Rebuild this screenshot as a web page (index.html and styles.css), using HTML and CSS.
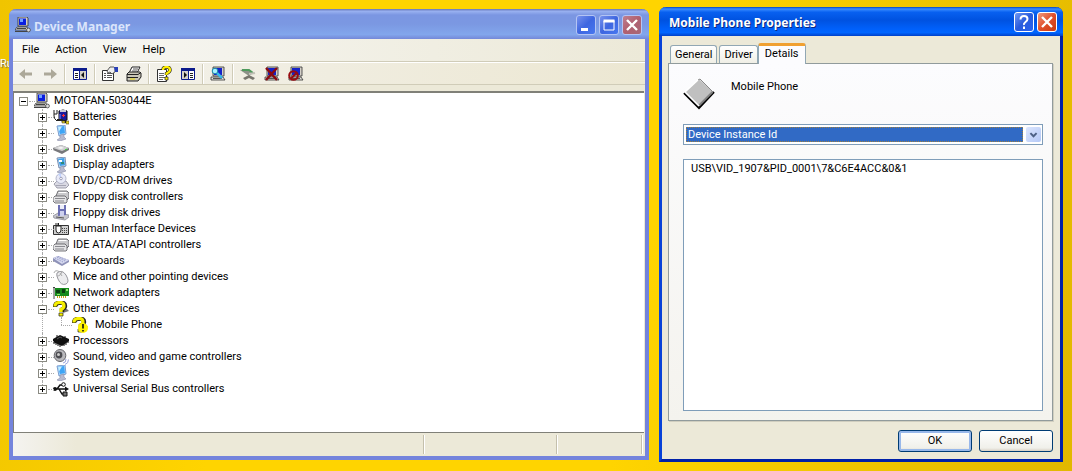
FILE: index.html
```html
<!DOCTYPE html>
<html lang="en">
<head>
  <meta charset="UTF-8" />
  <meta name="viewport" content="width=device-width, initial-scale=1.0"/>
  <title>Device Manager</title>
  <link rel="stylesheet" href="styles.css">
</head>
<body>
  <!-- ICON SPRITE (16x16 grid) -->
  <svg class="sprite" aria-hidden="true">
    <symbol id="i-pc" viewBox="0 0 16 16">
      <path d="M3 0h9l1 1v8H3z" fill="#d4d0c8" stroke="#333" stroke-width=".8"/>
      <path d="M4 1.500h7V8H4z" fill="#0a1ee0"/><path d="M5 2h3v3H5z" fill="#6fa0ff"/>
      <path d="M2 10h10l1 3H0z" fill="#e8e6e0" stroke="#333" stroke-width=".8"/>
      <path d="M2 11.500h9M0 14.500h12" stroke="#444"/>
      <circle cx="13.500" cy="13" r="1.900" fill="#ddd" stroke="#444" stroke-width=".8"/>
    </symbol>
    <symbol id="i-battery" viewBox="0 0 16 16">
      <path d="M1 1v6q0 3 3 5M4 1v4M1 5h3" fill="none" stroke="#222"/>
      <path d="M6 2q4-2 8 0v9q-4 2-8 0z" fill="#1a1a9c" stroke="#111"/>
      <path d="M7 1h6v2H7z" fill="#c8c8d8"/><path d="M7 5v5" stroke="#7b8dff"/>
      <path d="M9 6.500h3M10.500 5v3" stroke="#f33"/>
      <path d="M4 11h5l2 2h4" fill="none" stroke="#222" stroke-width="2"/>
      <path d="M9 12h3v2H9zM13 12h3v3h-3z" fill="#ecd820" stroke="#222" stroke-width=".5"/>
    </symbol>
    <symbol id="i-monitor" viewBox="0 0 16 16">
      <path d="M4 1l8-1 1 9-7 2z" fill="#a9d8ff" stroke="#7d9fd0"/>
      <path d="M5 2l6-1 1 7-5 1z" fill="#3fa5f6"/><path d="M5 2l4-.5-3 5z" fill="#c8efff"/>
      <path d="M7 10l4-1v3l2 2-6 2-3-1 3-2z" fill="#b8bbd0" stroke="#8a8da8" stroke-width=".6"/>
    </symbol>
    <symbol id="i-display" viewBox="0 0 16 16">
      <path d="M4 1l8-1 1 9-7 2z" fill="#b9dcf8" stroke="#7d8fb0"/>
      <path d="M5 2l6-1 1 7-5 1z" fill="#3f9fe8"/>
      <path d="M6 3h3v2H6z" fill="#fff"/><path d="M8 5h3v2H8z" fill="#2c8a7c"/>
      <path d="M7 10l4-1v3l2 2-6 2-3-1 3-2z" fill="#b8bbd0" stroke="#8a8da8" stroke-width=".6"/>
    </symbol>
    <symbol id="i-disk" viewBox="0 0 16 16">
      <path d="M0 7l8-3 8 3v2l-7 4-9-4z" fill="#77777b"/>
      <path d="M0 7l8-3 8 3-7 3z" fill="#cfcfd1"/>
      <path d="M4 7l4-1.500L11 7 8 8z" fill="#f4f4f4"/><path d="M12 9l2-1" stroke="#3d3"/>
    </symbol>
    <symbol id="i-cd" viewBox="0 0 16 16">
      <path d="M1 11l3-3h9l3 4-3 3H4z" fill="#d9d9e3" stroke="#8b8b9a" stroke-width=".8"/>
      <circle cx="8" cy="5.500" r="5" fill="#e9ebf8" stroke="#a5a8c0" stroke-width=".8"/>
      <path d="M8 5.500L5 1l3-.5z" fill="#c3d4ff"/><circle cx="8" cy="5.500" r="1.300" fill="#fff" stroke="#7c7fa0" stroke-width=".7"/>
      <path d="M3 12.500h10" stroke="#a5a5b3"/>
    </symbol>
    <symbol id="i-controller" viewBox="0 0 16 16">
      <path d="M5 2h9l2 2v5l-2 2H6L3 7z" fill="#c9c9cc" stroke="#55555a" stroke-width=".8"/>
      <path d="M6 3h7l1 1H5z" fill="#fff"/>
      <path d="M2 7h10l2 2v4l-1 1H2L0 12V9z" fill="#e3e3e5" stroke="#55555a" stroke-width=".8"/>
      <path d="M2 9.500h10M2 12h9" stroke="#8a8a90"/>
    </symbol>
    <symbol id="i-floppy" viewBox="0 0 16 16">
      <path d="M0 11l5-3 11 2v2l-4 3-11-2z" fill="#c6c6ce" stroke="#8c8c98" stroke-width=".8"/>
      <path d="M5 0h8v10l-8 1z" fill="#6c70b4"/><path d="M7 0h4v4H7z" fill="#eceef8"/>
      <path d="M7 6h4v5H7z" fill="#cdd0ee"/><path d="M3 12l8 1" stroke="#555"/>
    </symbol>
    <symbol id="i-hid" viewBox="0 0 16 16">
      <path d="M.5 4.500h15v9H.5z" fill="#cfcfcf" stroke="#333"/>
      <path d="M3 5h5v4q0 3-2.500 3T3 9z" fill="#fff" stroke="#222"/>
      <path d="M5.500 5V2M2 3h3" stroke="#222"/>
      <path d="M9 7.500h6M9 9.500h6M9 11.500h6" stroke="#444" stroke-dasharray="1 1"/>
    </symbol>
    <symbol id="i-keyboard" viewBox="0 0 16 16">
      <path d="M0 5l5-2 11 4v2l-7 4-9-5z" fill="#8e92b8"/>
      <path d="M0 5l5-2 11 4-7 4z" fill="#d7daf0"/>
      <path d="M2 5l8 4M4 4l8 4M5 3.500l8 3.500" stroke="#8d93c4" stroke-dasharray="1 1"/>
    </symbol>
    <symbol id="i-mouse" viewBox="0 0 16 16">
      <path d="M1 4q1-4 6-1" fill="none" stroke="#aaa"/>
      <path d="M4 4q5-4 9 2 4 7 0 9-5 2-8-5-2-4-1-6z" fill="#ececee" stroke="#98989e"/>
      <path d="M4 7q4 0 5-5M7 4l2 3" fill="none" stroke="#aaa"/>
    </symbol>
    <symbol id="i-network" viewBox="0 0 16 16">
      <path d="M1 2v12M0 2.500h2" stroke="#444"/>
      <path d="M2 3h14v8H2z" fill="#168a1c"/>
      <path d="M3 5h4v3H3zM9 4h3v4H9z" fill="#0a3f10"/><path d="M13 4h2v2h-2zM4 9h3v1H4z" fill="#8fe36c"/>
      <path d="M4 12h10" stroke="#c9a21d" stroke-width="2" stroke-dasharray="1 1"/>
    </symbol>
    <symbol id="i-question" viewBox="0 0 16 16">
      <path d="M9 7l5 1 2 2-6 2z" fill="#777"/>
      <path d="M2 6q0-4 5-4.500 5 0 5 3.500 0 2-3 3.500V11" fill="none" stroke="#222" stroke-width="4.400"/>
      <path d="M2 5.500q0-4 5-4 4 0 4 3.500 0 2-3 3.500V11" fill="none" stroke="#f6ee00" stroke-width="3.200"/>
      <path d="M6 12h4v3H6z" fill="#f6ee00" stroke="#222" stroke-width=".7"/>
    </symbol>
    <symbol id="i-unknown" viewBox="0 0 16 16">
      <use href="#i-question"/>
      <circle cx="11" cy="11" r="5" fill="#fff200"/>
      <path d="M11 7v4.500M11 13v1.500" stroke="#111" stroke-width="1.600"/>
    </symbol>
    <symbol id="i-chip" viewBox="0 0 16 16">
      <path d="M0 6l7-4 9 4v2l-7 5-9-4z" fill="#111"/>
      <path d="M1 8v3M3 9v3M5 10v3M7 11v3M11 11v2M13 9v3M15 8v2M4 2v2M12 3v2" stroke="#111"/>
      <path d="M4 6l3-2 2 1" fill="none" stroke="#777" stroke-width=".7"/>
    </symbol>
    <symbol id="i-sound" viewBox="0 0 16 16">
      <ellipse cx="7" cy="6.500" rx="5.800" ry="6" fill="#b9b9bd" stroke="#66666b"/>
      <circle cx="6" cy="6" r="3.400" fill="#4d4d52"/><circle cx="5.500" cy="5.500" r="1.500" fill="#ccc"/>
      <path d="M10 14q3 0 3-4M12 15.500q3.500-1 3.500-5" fill="none" stroke="#9aa5dd"/>
    </symbol>
    <symbol id="i-usb" viewBox="0 0 16 16">
      <path d="M2 8h11M4 8l3-4h3M6 8l3 5h2" fill="none" stroke="#111" stroke-width="1.400"/>
      <circle cx="2" cy="8" r="2" fill="#111"/><circle cx="10.500" cy="3.500" r="1.800" fill="#fff" stroke="#111"/>
      <path d="M10 11h4v4h-4z" fill="#777" stroke="#111"/><path d="M12 5.500L16 8l-4 2.500z" fill="#111"/>
    </symbol>
    <!-- toolbar -->
    <symbol id="t-back" viewBox="0 0 16 16"><path d="M1 8l6-5v3.500h7v3H7V13z" fill="#aca899"/></symbol>
    <symbol id="t-forward" viewBox="0 0 16 16"><path d="M15 8L9 3v3.500H2v3h7V13z" fill="#aca899"/></symbol>
    <symbol id="t-tree" viewBox="0 0 16 16">
      <path d="M1.500 2.500h13v11h-13z" fill="#fff" stroke="#0b1a8c"/><path d="M1 2h14v3H1z" fill="#0b1a8c"/>
      <path d="M7.500 4v10" stroke="#0b1a8c"/><path d="M8 5h6v8H8z" fill="#d4d0c8"/>
      <path d="M3 7.500h3M3 9.500h3M3 11.500h3" stroke="#222"/><path d="M12 6v6L9 9z" fill="#111"/>
    </symbol>
    <symbol id="t-pane" viewBox="0 0 16 16">
      <path d="M1.500 2.500h13v11h-13z" fill="#fff" stroke="#0b1a8c"/><path d="M1 2h14v3H1z" fill="#0b1a8c"/>
      <path d="M8.500 4v10" stroke="#0b1a8c"/><path d="M2 5h6v8H2z" fill="#d4d0c8"/>
      <path d="M10 7.500h3M10 9.500h3M10 11.500h3" stroke="#222"/><path d="M4 6v6l3-3z" fill="#111"/>
    </symbol>
    <symbol id="t-props" viewBox="0 0 16 16">
      <path d="M.5 4.500h11v10H.5z" fill="#fff" stroke="#333"/>
      <path d="M2 7.500h2M5 7.500h5M2 9.500h2M5 9.500h5M2 11.500h2M5 11.500h5" stroke="#555"/>
      <path d="M5 5l3-4h4l1 1v4l-3 2-2-2-2 1z" fill="#eee" stroke="#333" stroke-width=".8"/>
      <path d="M12 1h4v5h-3z" fill="#2840b8"/>
    </symbol>
    <symbol id="t-print" viewBox="0 0 16 16">
      <path d="M6 1h8l-3 6H3z" fill="#fff" stroke="#222"/><path d="M7 3h5M6 5h5" stroke="#555"/>
      <path d="M1 8l2-2h11l1 1v4l-3 4H1z" fill="#c9c6b8" stroke="#222"/>
      <path d="M1 8.500h11l3-2M1 11.500h11" fill="none" stroke="#222"/><path d="M4 13h5" stroke="#e8d800"/>
    </symbol>
    <symbol id="t-help" viewBox="0 0 16 16">
      <path d="M1.500 3.500h9v12h-9z" fill="#fff" stroke="#333"/><path d="M3 7.500h5M3 9.500h5M3 11.500h6M3 13.500h4" stroke="#666"/>
      <path d="M7 4q0-3 3.500-3T14 4q0 2-3.500 3.500V9" fill="none" stroke="#222" stroke-width="3.400"/>
      <path d="M7 4q0-3 3.500-3T14 4q0 2-3.500 3.500V9" fill="none" stroke="#ffef00" stroke-width="2.200"/>
      <path d="M9 11h3v3H9z" fill="#ffef00" stroke="#222" stroke-width=".7"/>
    </symbol>
    <symbol id="t-pc" viewBox="0 0 16 16">
      <path d="M3 1h11v9H3z" fill="#d4d0c8" stroke="#333" stroke-width=".8"/><path d="M4 2h8v7H4z" fill="#1522c8"/>
      <path d="M1 11h12l2 3H1z" fill="#e2e0da" stroke="#333" stroke-width=".8"/><path d="M3 12.500h9" stroke="#555"/>
    </symbol>
    <symbol id="t-scan" viewBox="0 0 16 16">
      <use href="#t-pc"/><path d="M6 6l6 6" stroke="#38b8e8" stroke-width="2.500"/>
      <circle cx="5" cy="5" r="2.800" fill="#a8f0ff" stroke="#1787a8"/>
    </symbol>
    <symbol id="t-update" viewBox="0 0 16 16">
      <path d="M0 4l8-1 5 4-4 3z" fill="#8b9187"/><path d="M2 4h7l4 3" fill="none" stroke="#4f9a5c" stroke-width="2"/>
      <path d="M3 12l6-3 6 3-2 2-4-2-4 2z" fill="#77756d"/><path d="M9 8l6-1" stroke="#c2c0b7" stroke-width="2"/>
    </symbol>
    <symbol id="t-uninstall" viewBox="0 0 16 16">
      <use href="#t-pc"/><path d="M2 2l11 12M13 2L2 14" stroke="#8b0a10" stroke-width="2.400"/>
    </symbol>
    <symbol id="t-disable" viewBox="0 0 16 16">
      <use href="#t-pc"/><circle cx="5.500" cy="9.500" r="4.300" fill="none" stroke="#980a10" stroke-width="2"/>
      <path d="M3 12.500l6-6" stroke="#980a10" stroke-width="2"/>
    </symbol>
  </svg>

  <main class="desktop">
    <span class="desktop-label">Ru</span>

    <!-- DEVICE MANAGER -->
    <section class="window inactive" aria-label="Device Manager">
      <header class="titlebar">
        <svg class="icon"><use href="#i-pc"/></svg>
        <h1>Device Manager</h1>
        <button class="caption" aria-label="Minimize"><svg viewBox="0 0 20 20"><path d="M5 14.500h7" stroke="#fff" stroke-width="3"/></svg></button>
        <button class="caption" aria-label="Maximize"><svg viewBox="0 0 20 20"><path d="M5 6v9h10V5.500H5" fill="none" stroke="#fff"/><path d="M4.500 6h11" stroke="#fff" stroke-width="3"/></svg></button>
        <button class="caption close" aria-label="Close"><svg viewBox="0 0 20 20"><path d="M5 5l10 10M15 5L5 15" stroke="#fff" stroke-width="2.400"/></svg></button>
      </header>
      <nav class="menubar">
        <button>File</button><button>Action</button><button>View</button><button>Help</button>
      </nav>
      <div class="toolbar">
        <button aria-label="Back"><svg class="icon"><use href="#t-back"/></svg></button>
        <button aria-label="Forward"><svg class="icon"><use href="#t-forward"/></svg></button>
        <i></i>
        <button aria-label="Console tree"><svg class="icon"><use href="#t-tree"/></svg></button>
        <i></i>
        <button aria-label="Properties"><svg class="icon"><use href="#t-props"/></svg></button>
        <button aria-label="Print"><svg class="icon"><use href="#t-print"/></svg></button>
        <i></i>
        <button aria-label="Help"><svg class="icon"><use href="#t-help"/></svg></button>
        <button aria-label="Action pane"><svg class="icon"><use href="#t-pane"/></svg></button>
        <i></i>
        <button aria-label="Scan for hardware changes"><svg class="icon"><use href="#t-scan"/></svg></button>
        <i></i>
        <button aria-label="Update driver"><svg class="icon"><use href="#t-update"/></svg></button>
        <button aria-label="Uninstall"><svg class="icon"><use href="#t-uninstall"/></svg></button>
        <button aria-label="Disable"><svg class="icon"><use href="#t-disable"/></svg></button>
      </div>
      <div class="tree">
        <div class="node"><button class="box" aria-label="Collapse"></button><svg class="icon"><use href="#i-pc"/></svg><span>MOTOFAN-503044E</span></div>
        <ul id="devices"></ul>
      </div>
      <footer class="statusbar"><span></span><span></span><span></span></footer>
    </section>

    <!-- PROPERTIES DIALOG -->
    <section class="window dialog" aria-label="Mobile Phone Properties">
      <header class="titlebar">
        <h1>Mobile Phone Properties</h1>
        <button class="caption" aria-label="Help"><svg viewBox="0 0 20 20"><path d="M6.500 7.500Q6.500 4 10 4t3.500 3q0 1.500-2 3T10 13M10 14.500V17" fill="none" stroke="#fff" stroke-width="2"/></svg></button>
        <button class="caption close" aria-label="Close"><svg viewBox="0 0 20 20"><path d="M5 5l10 10M15 5L5 15" stroke="#fff" stroke-width="2.400"/></svg></button>
      </header>
      <div class="dialog-body">
        <div class="tabs" role="tablist">
          <button role="tab">General</button>
          <button role="tab">Driver</button>
          <button role="tab" class="active" aria-selected="true">Details</button>
        </div>
        <div class="panel">
          <div class="device">
            <svg viewBox="0 0 32 32">
              <path d="M1 15L16 30 31 14" fill="none" stroke="#000" stroke-width="2"/>
              <path d="M2 14L16 1l14 13-14 14z" fill="#c0c0c0"/>
              <path d="M16 27.500L29.500 14" stroke="#808080" stroke-width="2"/>
              <path d="M16 1L2 14l14 14" fill="none" stroke="#fff" stroke-width="1.500"/>
              <path d="M15 2L17 1l13 13" fill="none" stroke="#888"/>
            </svg>
            <span>Mobile Phone</span>
          </div>
          <div class="combo">
            <select aria-label="Property"><option>Device Instance Id</option></select>
            <span class="arrow"><svg viewBox="0 0 15 17"><path d="M4 7l3.500 3.500L11 7" fill="none" stroke="#4d6185" stroke-width="2.200"/></svg></span>
          </div>
          <textarea readonly aria-label="Value">USB\VID_1907&amp;PID_0001\7&amp;C6E4ACC&amp;0&amp;1</textarea>
        </div>
        <div class="actions">
          <button class="default">OK</button>
          <button>Cancel</button>
        </div>
      </div>
    </section>
  </main>

  <script>
  // DEVICE TREE DATA
  const devices = [
    {name:'Batteries', icon:'battery'},
    {name:'Computer', icon:'monitor'},
    {name:'Disk drives', icon:'disk'},
    {name:'Display adapters', icon:'display'},
    {name:'DVD/CD-ROM drives', icon:'cd'},
    {name:'Floppy disk controllers', icon:'controller'},
    {name:'Floppy disk drives', icon:'floppy'},
    {name:'Human Interface Devices', icon:'hid'},
    {name:'IDE ATA/ATAPI controllers', icon:'controller'},
    {name:'Keyboards', icon:'keyboard'},
    {name:'Mice and other pointing devices', icon:'mouse'},
    {name:'Network adapters', icon:'network'},
    {name:'Other devices', icon:'question', children:[{name:'Mobile Phone', icon:'unknown'}]},
    {name:'Processors', icon:'chip'},
    {name:'Sound, video and game controllers', icon:'sound'},
    {name:'System devices', icon:'monitor'},
    {name:'Universal Serial Bus controllers', icon:'usb'},
  ];

  const label = d => `<svg class="icon"><use href="#i-${d.icon}"/></svg><span>${d.name}</span>`;

  // BUILD TREE
  document.getElementById('devices').innerHTML = devices.map(d => {
    const kids = (d.children||[]).map(c => `<li><div class="node leaf">${label(c)}</div></li>`).join('');
    const cls  = kids ? 'box' : 'box plus';
    return `<li><div class="node"><button class="${cls}" aria-label="Toggle"></button>${label(d)}</div>` +
      (kids ? `<ul>${kids}</ul>` : '') + '</li>';
  }).join('');
  </script>
</body>
</html>
```
FILE: styles.css
```css
/* RESET & BASE */
* { margin:0; padding:0; box-sizing:border-box; }
body { font:11px/16px Roboto,"Liberation Sans",sans-serif; color:#000; }
button { font:inherit; color:inherit; background:none; border:none; }
ul { list-style:none; }
.sprite { display:none; }
.icon { width:16px; height:16px; flex:none; display:block; }

/* DESKTOP */
.desktop {
  min-height:100vh; padding:7px 9px 9px;
  display:grid; grid-template-columns:640fr 404fr; gap:10px;
  background:linear-gradient(100deg,#f0c400 0%,#ffd400 25%,#ffd400 60%,#e2b800 100%);
  position:relative; overflow:hidden;
}
.desktop-label { position:absolute; left:0; top:56px; color:#fff; text-shadow:1px 1px 1px #665; }

/* WINDOWS */
.window {
  position:relative; display:flex; flex-direction:column; min-width:0;
  background:#ece9d8; border:3px solid #0842d8; border-top-width:0;
  border-right-color:#0020a8; border-bottom-color:#0020a8;
  border-radius:7px 7px 0 0;
}
.window.inactive {
  margin:2px 0; border-color:#7484dc; border-width:0 4px 4px;
}
.titlebar {
  height:29px; margin:0 -3px; padding:0 6px 0 10px; flex:none;
  display:flex; align-items:center; gap:3px;
  border-radius:7px 7px 0 0; color:#fff;
  background:linear-gradient(#0848c0 0,#3a8cff 7%,#0860f0 18%,#0052e0 45%,#0060fa 75%,#0066ff 88%,#0040c8 100%);
}
.inactive .titlebar {
  height:30px; margin:0 -4px; padding:2px 7px 0 6px; color:#dbe5fb;
  background:linear-gradient(#6878b8 0,#98b0f0 8%,#7b96e2 20%,#7b98e2 50%,#82a6ec 85%,#7488d8 100%);
}
.titlebar h1 { flex:1; padding-top:3px; font:bold 12px/20px "Noto Sans",sans-serif; white-space:nowrap; text-shadow:1px 1px #0a2880; }
.inactive .titlebar h1 { text-shadow:none; }
.caption {
  width:20px; height:20px; flex:none; border:1px solid #fff; border-radius:3px;
  background:linear-gradient(135deg,#6f98f4,#2a5bdc 50%,#2a62f0);
}
.caption svg { display:block; width:20px; height:20px; margin:-1px; }
.caption.close { background:linear-gradient(135deg,#f09a80,#e0502c 50%,#cc3a10); }
.inactive .caption { border-color:#b4c4f4; background:linear-gradient(135deg,#7892ec,#3e66e0 50%,#4878f0); }
.inactive .caption.close { background:linear-gradient(135deg,#c08090,#b06070 50%,#a86878); }

/* MENU + TOOLBAR */
.menubar {
  height:23px; padding:0 9px; display:flex; align-items:center; gap:16px; flex:none;
  background:linear-gradient(90deg,#f8f8f6,#ece9d8); border-bottom:1px solid #d0ccb8;
}
.toolbar {
  height:23px; margin-bottom:6px; padding:0 1px; display:flex; align-items:center; flex:none;
  background:linear-gradient(90deg,#f4f3ee,#ece7d2); border-top:1px solid #fff; border-bottom:1px solid #d0ccb8;
}
.toolbar button { padding:0 4px; }
.toolbar i { width:2px; height:20px; margin:0 2px; background:#d0ccb8; border-right:1px solid #fff; }

/* DEVICE TREE */
.tree {
  flex:1; margin-right:1px; padding:0 5px; background:#fff;
  border:1px solid #808078; border-width:2px 0 1px 1px;
}
.node { display:flex; align-items:center; height:16px; white-space:nowrap; }
.node span { margin-left:4px; }
.box {
  width:9px; height:9px; margin-right:6px; flex:none; position:relative;
  border:1px solid #8a8a82;
  background:linear-gradient(#000,#000) center/5px 1px no-repeat #fff;
}
.box.plus {
  background:linear-gradient(#000,#000) center/5px 1px no-repeat,
    linear-gradient(#000,#000) center/1px 5px no-repeat #fff;
}
.box::after { content:''; position:absolute; left:9px; top:3px; width:6px; border-top:1px dotted #aaa; }
.tree ul { padding-left:19px; }
.tree li { position:relative; }
.tree li::before { content:''; position:absolute; left:4px; top:0; bottom:0; border-left:1px dotted #aaa; }
.tree li:last-child::before { bottom:8px; }
.leaf { padding-left:15px; position:relative; }
.leaf span { margin-left:7px; }
.leaf::before { content:''; position:absolute; left:4px; top:8px; width:11px; border-top:1px dotted #aaa; }

/* STATUS BAR */
.statusbar {
  height:23px; flex:none; padding:2px; display:grid; grid-template-columns:1fr 133px 85px;
  background:linear-gradient(90deg,#f4f3f0,#ece9d8 10%);
}
.statusbar span { border-right:1px solid #fff; box-shadow:-1px 0 #c4c0ac inset; }

/* DIALOG */
.dialog-body { flex:1; display:flex; flex-direction:column; padding:7px 7px 7px 6px; }
.tabs { display:flex; align-items:flex-end; padding-left:2px; height:20px; }
.tabs button {
  height:18px; padding:0 4px; margin-right:2px; background:linear-gradient(#fff,#f0efe6);
  border:1px solid #91a7b4; border-bottom:none; border-radius:3px 3px 0 0;
}
.tabs .active {
  height:21px; margin-bottom:-1px; padding:0 6px 3px; margin-left:-2px; z-index:1;
  background:#fcfcfe; border-top:3px solid #f0a030;
}
.panel {
  flex:1; display:flex; flex-direction:column; padding:14px 9px 9px 14px;
  border:1px solid #919b9c; background:linear-gradient(#fcfcfe,#f4f3ee);
  box-shadow:1px 1px #d0cebf;
}
.device { display:flex; gap:16px; height:46px; }
.device svg { width:32px; height:32px; }
.device span { padding-top:1px; }
.combo { display:flex; height:21px; padding:2px 1px 2px 2px; border:1px solid #7f9db9; background:#fff; }
.combo select {
  flex:1; min-width:0; padding-left:1px; appearance:none; font:inherit; line-height:13px;
  color:#fff; background:#316ac5; border:1px dotted #a08040; border-radius:0;
}
.arrow { width:15px; margin-left:3px; border-radius:2px; background:linear-gradient(135deg,#dce6fe,#b4c8f6); }
.arrow svg { display:block; width:15px; height:15px; }
.panel textarea {
  flex:1; margin-top:14px; padding:1px 7px; resize:none; font:inherit;
  color:#000; background:#fff; border:1px solid #7f9db9; outline:none;
}
.actions { display:flex; justify-content:flex-end; gap:7px; padding-top:9px; }
.actions button {
  width:74px; height:22px; border:1px solid #003c74; border-radius:3px;
  background:linear-gradient(#fff,#f0f0ea 85%,#d8d0c4);
}
.actions .default { box-shadow:inset 0 0 0 2px #98b8ea; }
```
